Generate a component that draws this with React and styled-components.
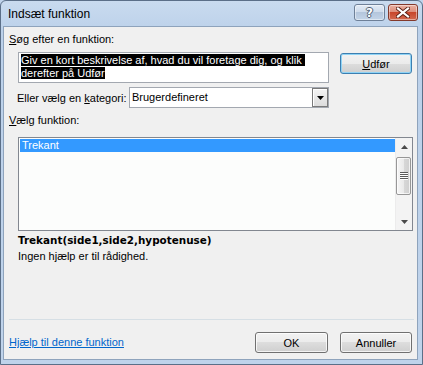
import React from 'react'
import styled, { createGlobalStyle } from 'styled-components'

const GlobalStyle = createGlobalStyle`
    html, body {
        margin: 0;
        padding: 0;
        background: #bfd3eb;
    }
    * {
        box-sizing: border-box;
    }
`

const Window = styled.div`
    width: 423px;
    height: 365px;
    display: flex;
    flex-direction: column;
    border: 1px solid #5b6f88;
    border-radius: 6px 6px 0 0;
    padding: 0 4px 4px 2px;
    background: linear-gradient(to bottom, #c9dbef 0px, #bcd1ea 30px, #bfd3eb 100%);
    font-family: "Liberation Sans", Arial, sans-serif;
    font-size: 11px;
    color: #000;
    overflow: hidden;
`

const TitleBar = styled.div`
    height: 25px;
    flex: none;
    display: flex;
    align-items: flex-start;
    padding-top: 3px;
`

const Title = styled.div`
    flex: 1;
    font-size: 12px;
    line-height: 14px;
    padding: 3px 0 0 5px;
`

const CaptionButton = styled.div`
    width: ${(props) => props.w}px;
    height: 17px;
    margin-left: ${(props) => props.gap || 0}px;
    border: 1px solid ${(props) => props.close ? '#83392b' : '#6e8098'};
    border-radius: 3px;
    display: flex;
    align-items: center;
    justify-content: center;
    background: ${(props) => props.close
        ? 'linear-gradient(to bottom, #eab1a3 0%, #dd8f7c 45%, #c8462b 50%, #d36a50 100%)'
        : 'linear-gradient(to bottom, #e3ebf5 0%, #cfdcec 45%, #b4c6dc 50%, #c3d4e8 100%)'};
    box-shadow: inset 0 0 0 1px rgba(255, 255, 255, 0.45);
`

const HelpGlyph = styled.span`
    font-family: "DejaVu Sans", sans-serif;
    font-weight: bold;
    font-size: 12px;
    line-height: 12px;
    color: #fff;
    text-shadow: -1px 0 #4f5f73, 1px 0 #4f5f73, 0 -1px #4f5f73, 0 1px #4f5f73;
`

const Body = styled.div`
    flex: 1;
    display: flex;
    flex-direction: column;
    background: #f0f0f0;
    border: 1px solid #8ea3bc;
    padding: 6px 4px 6px 5px;
`

const Label = styled.div`
    line-height: 13px;
    margin-top: ${(props) => props.mt || 0}px;
    white-space: nowrap;
`

const Key = styled.span`
    text-decoration: underline;
`

const SearchRow = styled.div`
    display: flex;
    align-items: flex-start;
    margin-top: 6px;
`

const SearchBox = styled.div`
    width: 311px;
    height: 31px;
    margin-left: 9px;
    background: #fff;
    border: 1px solid #a3a8b0;
    padding: 1px 2px;
    line-height: 13px;
`

const Selected = styled.span`
    background: #000;
    color: #fff;
    white-space: pre;
`

const Button = styled.div`
    width: ${(props) => props.w}px;
    height: 21px;
    margin-left: ${(props) => props.ml || 0}px;
    margin-top: ${(props) => props.mt || 0}px;
    display: flex;
    align-items: center;
    justify-content: center;
    border: 1px solid ${(props) => props.focused ? '#3c7fb1' : '#707070'};
    border-radius: 3px;
    background: linear-gradient(to bottom, #f2f2f2 0%, #ebebeb 50%, #dddddd 50%, #cfcfcf 100%);
    box-shadow: inset 0 0 0 1px ${(props) => props.focused ? '#8fd3f5' : 'rgba(255, 255, 255, 0.75)'};
`

const CategoryRow = styled.div`
    display: flex;
    align-items: center;
    margin-top: 4px;
    height: 21px;
`

const CategoryLabel = styled.div`
    width: 112px;
    margin-left: 8px;
    white-space: nowrap;
`

const Select = styled.div`
    width: 200px;
    height: 21px;
    display: flex;
    align-items: stretch;
    background: #fff;
    border: 1px solid #a3a8b0;
`

const SelectText = styled.div`
    flex: 1;
    padding-left: 2px;
    line-height: 19px;
`

const DropButton = styled.div`
    width: 16px;
    display: flex;
    align-items: center;
    justify-content: center;
    border: 1px solid #7a7a7a;
    background: linear-gradient(to bottom, #f4f4f4, #dcdcdc);
    box-shadow: inset 1px 1px 0 #fff;
`

const FunctionList = styled.div`
    width: 395px;
    height: 94px;
    margin: 10px 0 0 9px;
    display: flex;
    border: 1px solid #828790;
    background: #fcfdfc;
`

const Items = styled.div`
    flex: 1;
    padding: 1px 0 0 1px;
`

const Item = styled.div`
    height: 13px;
    line-height: 13px;
    padding-left: 2px;
    background: ${(props) => props.active ? '#3399ff' : 'transparent'};
    color: ${(props) => props.active ? '#fff' : '#000'};
`

const ScrollBar = styled.div`
    width: 17px;
    display: flex;
    flex-direction: column;
    background: #f3f3f3;
    border-left: 1px solid #ececec;
`

const ScrollArrow = styled.div`
    height: 17px;
    flex: none;
    display: flex;
    align-items: center;
    justify-content: center;
`

const Thumb = styled.div`
    height: 38px;
    margin: 2px 1px 0 0;
    border: 1px solid #979797;
    border-radius: 2px;
    display: flex;
    align-items: center;
    justify-content: center;
    background: linear-gradient(to right, #f6f6f6 0%, #eaeaea 50%, #d8d8d8 51%, #cfcfcf 100%);
    box-shadow: inset 0 0 0 1px rgba(255, 255, 255, 0.7);
`

const Spacer = styled.div`
    flex: 1;
`

const Signature = styled.div`
    margin: 3px 0 0 9px;
    font-family: "DejaVu Sans", Tahoma, sans-serif;
    font-weight: bold;
    font-size: 10.4px;
    line-height: 13px;
`

const Description = styled.div`
    margin: 3px 0 0 9px;
    line-height: 13px;
`

const Separator = styled.div`
    height: 1px;
    margin-right: -1px;
    background: #d6dfe5;
`

const Footer = styled.div`
    display: flex;
    align-items: center;
    margin-top: 12px;
    padding-right: 1px;
`

const HelpLink = styled.span`
    flex: 1;
    color: #0066cc;
    text-decoration: underline;
    line-height: 13px;
`

const Triangle = ({ down, color = '#000' }) => (
    <svg width="7" height="4" viewBox="0 0 7 4">
        <path d={down ? 'M0 0H7L3.5 4Z' : 'M0 4H7L3.5 0Z'} fill={color} />
    </svg>
)

const Grip = () => (
    <svg width="8" height="9" viewBox="0 0 8 9">
        {[0, 2, 4, 6].map((y) => (
            <g key={y}>
                <rect x="0" y={y} width="8" height="1" fill="#5c5c5c" />
                <rect x="0" y={y + 1} width="8" height="1" fill="#ffffff" />
            </g>
        ))}
    </svg>
)

const CloseGlyph = () => (
    <svg width="14" height="11" viewBox="0 0 14 11">
        <path d="M2 1.5L12 9.5M12 1.5L2 9.5" stroke="#5a2015" strokeWidth="4" strokeLinecap="square" />
        <path d="M2 1.5L12 9.5M12 1.5L2 9.5" stroke="#fff" strokeWidth="2.2" strokeLinecap="square" />
    </svg>
)

const App = () => {
    return (
        <Window>
            <GlobalStyle />
            <TitleBar>
                <Title>Indsæt funktion</Title>
                <CaptionButton w={31}>
                    <HelpGlyph>?</HelpGlyph>
                </CaptionButton>
                <CaptionButton w={30} gap={3} close>
                    <CloseGlyph />
                </CaptionButton>
            </TitleBar>
            <Body>
                <Label><Key>S</Key>øg efter en funktion:</Label>
                <SearchRow>
                    <SearchBox>
                        <Selected>Giv en kort beskrivelse af, hvad du vil foretage dig, og klik </Selected>
                        <br />
                        <Selected>derefter på Udfør</Selected>
                    </SearchBox>
                    <Button w={72} ml={11} mt={1} focused><Key>U</Key>dfør</Button>
                </SearchRow>
                <CategoryRow>
                    <CategoryLabel>Eller vælg en <Key>k</Key>ategori:</CategoryLabel>
                    <Select>
                        <SelectText>Brugerdefineret</SelectText>
                        <DropButton>
                            <Triangle down />
                        </DropButton>
                    </Select>
                </CategoryRow>
                <Label mt={6}><Key>V</Key>ælg funktion:</Label>
                <FunctionList>
                    <Items>
                        <Item active>Trekant</Item>
                    </Items>
                    <ScrollBar>
                        <ScrollArrow><Triangle color="#4a4a4a" /></ScrollArrow>
                        <Thumb><Grip /></Thumb>
                        <Spacer />
                        <ScrollArrow><Triangle down color="#4a4a4a" /></ScrollArrow>
                    </ScrollBar>
                </FunctionList>
                <Signature>Trekant(side1,side2,hypotenuse)</Signature>
                <Description>Ingen hjælp er til rådighed.</Description>
                <Spacer />
                <Separator />
                <Footer>
                    <HelpLink>Hjælp til denne funktion</HelpLink>
                    <Button w={73}>OK</Button>
                    <Button w={72} ml={12}>Annuller</Button>
                </Footer>
            </Body>
        </Window>
    )
}

export default App
